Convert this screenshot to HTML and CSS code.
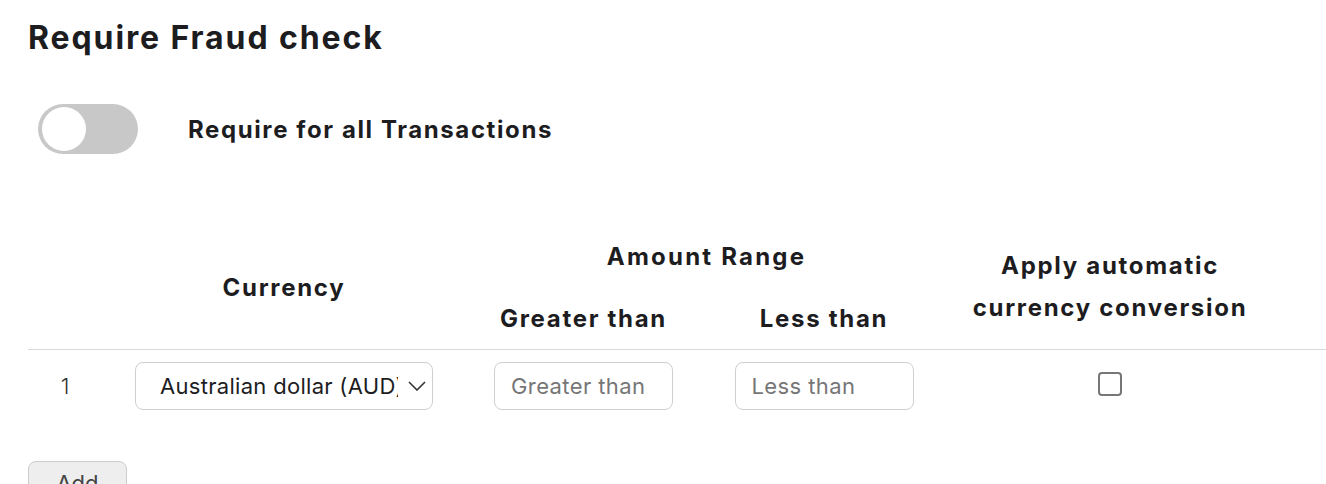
FILE: index.html
```html
<!DOCTYPE html>
<html lang="en">
<head>
  <meta charset="UTF-8" />
  <meta name="viewport" content="width=device-width, initial-scale=1.0" />
  <title>Require Fraud check</title>
  <link rel="stylesheet" href="styles.css">
</head>
<body>
  <h2 class="title">Require Fraud check</h2>

  <div class="toggle-row">
    <label class="switch">
      <input type="checkbox" id="requireAll">
      <span class="slider"></span>
    </label>
    <span class="toggle-label">Require for all Transactions</span>
  </div>

  <table class="rules">
    <colgroup>
      <col class="c-num">
      <col class="c-cur">
      <col class="c-gt">
      <col class="c-lt">
      <col class="c-conv">
      <col>
    </colgroup>
    <thead>
      <tr>
        <th rowspan="2"></th>
        <th rowspan="2">Currency</th>
        <th colspan="2" class="range">Amount Range</th>
        <th rowspan="2" class="conv">Apply automatic<br>currency conversion</th>
        <th rowspan="2"></th>
      </tr>
      <tr class="sub">
        <th>Greater than</th>
        <th>Less than</th>
      </tr>
    </thead>
    <tbody>
      <tr>
        <td class="num">1</td>
        <td>
          <select class="currency">
            <option>Australian dollar (AUD)</option>
            <option>US dollar (USD)</option>
            <option>Euro (EUR)</option>
          </select>
        </td>
        <td><input type="text" class="amount" placeholder="Greater than"></td>
        <td><input type="text" class="amount" placeholder="Less than"></td>
        <td><input type="checkbox" class="check"></td>
        <td></td>
      </tr>
    </tbody>
  </table>

  <button class="add">Add</button>
</body>
</html>
```

FILE: styles.css
```css
body { margin: 0; padding: 19px 0 0 28px; font-family: Inter, "Liberation Sans", Arial, sans-serif; color: #1d1d1f; background: #fff; }
.title { margin: 0; font-size: 32px; line-height: 38px; font-weight: 700; letter-spacing: 1.9px; }

.toggle-row { display: flex; align-items: center; gap: 50px; margin-top: 47px; padding-left: 10px; }
.switch { position: relative; width: 100px; height: 50px; flex: none; }
.switch input { opacity: 0; width: 0; height: 0; margin: 0; }
.slider { position: absolute; inset: 0; background: #c8c8c8; border-radius: 25px; }
.slider::before { content: ""; position: absolute; left: 4px; top: 3px; width: 44px; height: 44px; border-radius: 50%; background: #fff; }
.toggle-label { font-size: 24px; font-weight: 700; letter-spacing: 1.6px; }

.rules { width: 1298px; margin-top: 71px; border-collapse: collapse; table-layout: fixed; }
.c-num { width: 74px; }
.c-cur { width: 364px; }
.c-gt { width: 235px; }
.c-lt { width: 246px; }
.c-conv { width: 326px; }
.rules th { font-size: 24px; font-weight: 700; letter-spacing: 1.7px; text-align: center; vertical-align: middle; padding: 0; height: 62px; }
.rules th.range { letter-spacing: 2.2px; }
.rules th.conv { line-height: 42px; }
.rules thead { border-bottom: 1px solid #d9d9d9; }
.rules td { height: 72px; padding: 0; text-align: center; vertical-align: middle; }
.rules td.num { font-size: 22px; font-weight: 300; color: #333; }

.currency { appearance: none; width: 298px; height: 48px; padding: 0 34px 0 24px; font: inherit; font-size: 22px; letter-spacing: 0.3px; color: #1d1d1f; background: #fff url("data:image/svg+xml;utf8,<svg xmlns='http://www.w3.org/2000/svg' width='18' height='10' viewBox='0 0 18 10'><path d='M1 1l8 8 8-8' fill='none' stroke='%23333' stroke-width='1.6'/></svg>") no-repeat right 6px center; border: 1px solid #cfcfcf; border-radius: 8px; }
.amount { box-sizing: border-box; width: 179px; height: 48px; padding: 0 16px; font: inherit; font-size: 22px; letter-spacing: 0.4px; border: 1px solid #cfcfcf; border-radius: 8px; }
.amount::placeholder { color: #767676; }
.check { appearance: none; width: 24px; height: 24px; margin: 0; border: 2px solid #777; border-radius: 4px; background: #fff; }

.add { margin-top: 39px; width: 99px; height: 44px; font: inherit; font-size: 22px; color: #444; background: #eee; border: 1px solid #ccc; border-radius: 8px; }
```
